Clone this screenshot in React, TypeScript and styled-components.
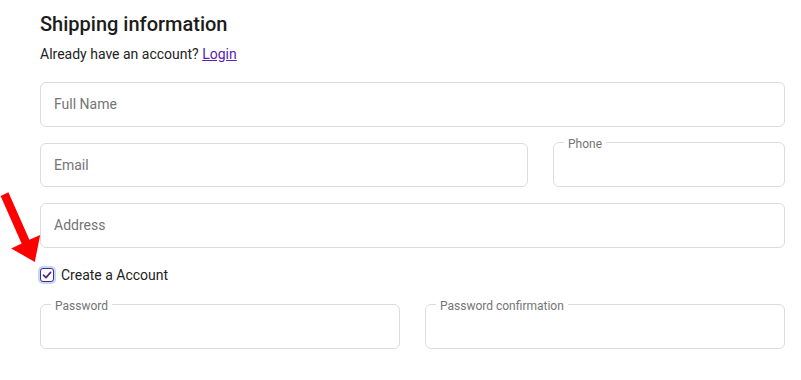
import styled, { createGlobalStyle } from 'styled-components'

const GlobalStyle = createGlobalStyle`
  body {
    margin: 0;
    background: #fff;
    font-family: Roboto, "Noto Sans", sans-serif;
    color: #1f1f1f;
  }
`

export default function App() {
  return (
    <>
      <GlobalStyle />
      <Page>
        <Title>Shipping information</Title>
        <Subtitle>
          Already have an account? <LoginLink href='#'>Login</LoginLink>
        </Subtitle>
        <Form>
          <Input placeholder='Full Name' />
          <Row $cols='1fr 232px'>
            <Input placeholder='Email' />
            <Outlined>
              <Legend>Phone</Legend>
            </Outlined>
          </Row>
          <Input placeholder='Address' />
          <CheckRow>
            <CheckBox>
              <svg width='10' height='10' viewBox='0 0 10 10'>
                <polyline points='1.5,5.2 4,7.6 8.6,2.4' fill='none' stroke='#4a2a8c' strokeWidth='1.7' strokeLinecap='round' strokeLinejoin='round' />
              </svg>
            </CheckBox>
            <CheckLabel>Create a Account</CheckLabel>
          </CheckRow>
          <Row $cols='1fr 1fr'>
            <Outlined>
              <Legend>Password</Legend>
            </Outlined>
            <Outlined>
              <Legend>Password confirmation</Legend>
            </Outlined>
          </Row>
        </Form>
      </Page>
      <Arrow width='50' height='270' viewBox='0 0 50 270'>
        <polygon
          points='8.4,192.3 29.4,239.8 40.2,235 34.8,262 11.2,248.4 21.6,243.6 0.6,196.1'
          fill='#ff0000'
        />
      </Arrow>
    </>
  )
}

const Page = styled.div`
  width: 745px;
  padding: 10px 0 0 40px;
`

const Title = styled.h2`
  margin: 0;
  font-size: 20px;
  line-height: 28px;
  font-weight: 500;
  color: #1c1c1c;
`

const Subtitle = styled.p`
  margin: 6px 0 0;
  font-size: 14px;
  line-height: 20px;
  color: #222;
`

const LoginLink = styled.a`
  color: #5b21b6;
  text-decoration: underline;
`

const Form = styled.form`
  display: flex;
  flex-direction: column;
  gap: 16px;
  margin-top: 18px;
`

const Row = styled.div<{ $cols: string }>`
  display: grid;
  grid-template-columns: ${p => p.$cols};
  gap: 25px;
`

const Input = styled.input`
  box-sizing: border-box;
  width: 100%;
  height: 44.5px;
  padding: 0 13px;
  border: 1px solid #dcdcdc;
  border-radius: 6px;
  font-family: Roboto, sans-serif;
  font-size: 14px;
  color: #333;
  outline: none;

  ::placeholder {
    color: #70757a;
  }
`

const Outlined = styled.fieldset`
  box-sizing: border-box;
  height: 50.5px;
  margin: -6px 0 0;
  padding: 0 14px;
  border: 1px solid #dcdcdc;
  border-radius: 6px;
  min-width: 0;
`

const Legend = styled.legend`
  position: relative;
  top: 1px;
  margin-left: -4px;
  padding: 0 4px;
  font-size: 12px;
  line-height: 12px;
  color: #757575;
`

const CheckRow = styled.label`
  display: flex;
  align-items: center;
  gap: 7px;
  height: 20px;
  margin: 1px 0 4px;
`

const CheckBox = styled.span`
  box-sizing: border-box;
  display: flex;
  align-items: center;
  justify-content: center;
  width: 14px;
  height: 14px;
  border: 1.5px solid #4a2a8c;
  border-radius: 3px;
  background: #fff;
  box-shadow: 0 0 0 2px #c6d5fd;
`

const CheckLabel = styled.span`
  font-size: 14px;
  color: #222;
`

const Arrow = styled.svg`
  position: absolute;
  left: 0;
  top: 0;
  pointer-events: none;
`
